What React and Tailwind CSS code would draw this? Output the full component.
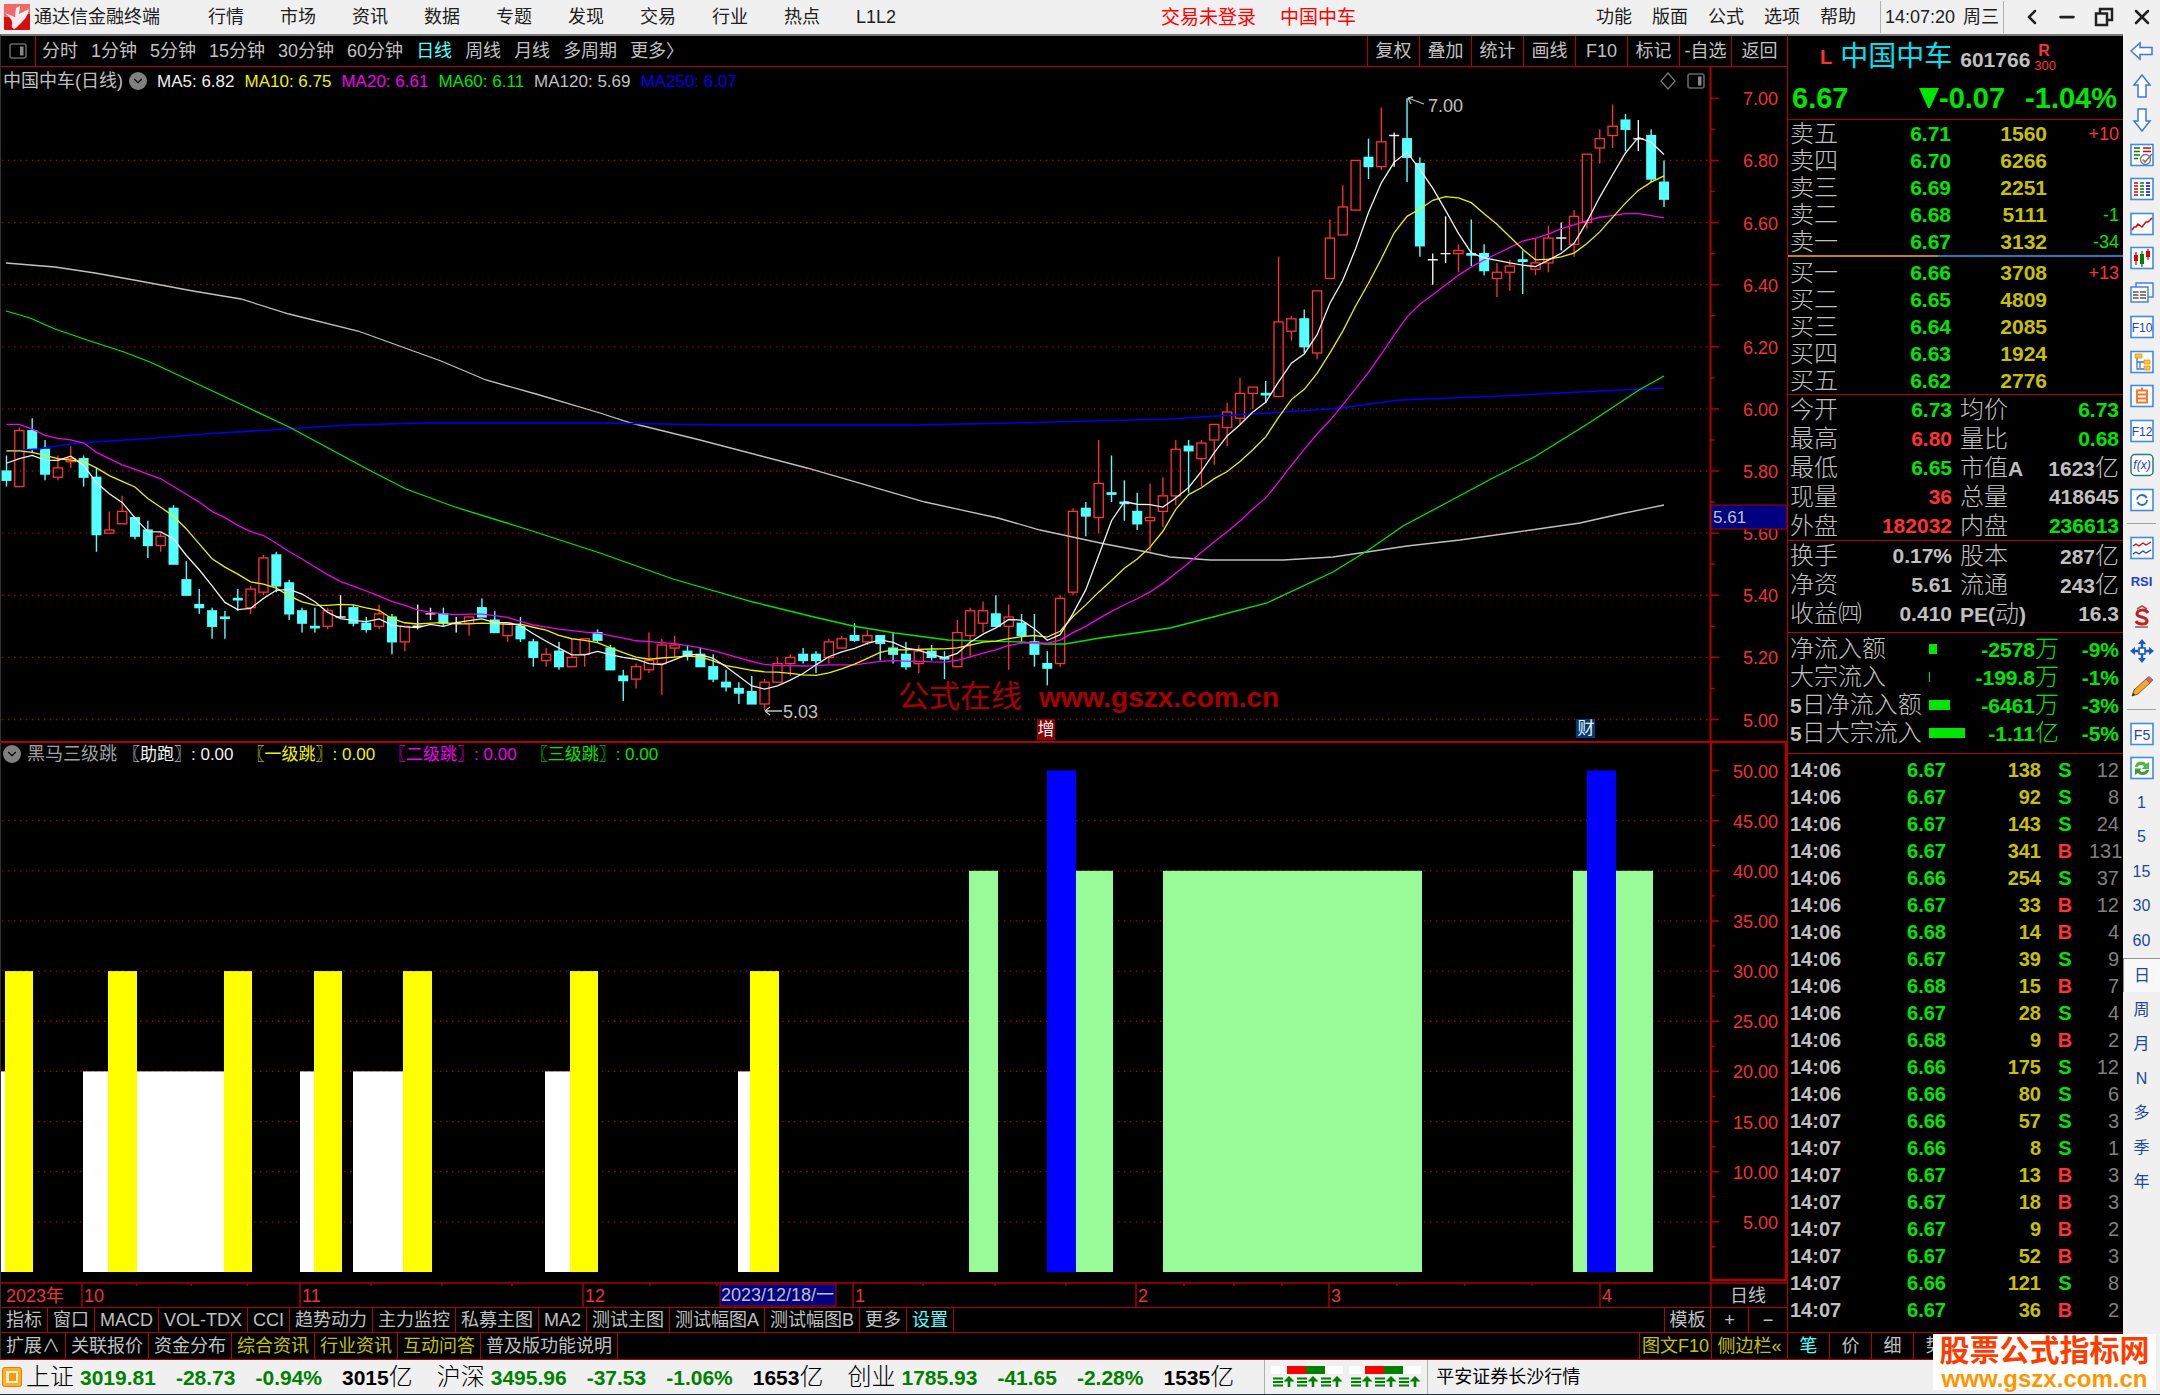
import { ChevronDown, ChevronLeft, Minus, X } from "lucide-react";

const MENU = ["行情", "市场", "资讯", "数据", "专题", "发现", "交易", "行业", "热点", "L1L2"];
const TOOLS = ["功能", "版面", "公式", "选项", "帮助"];
const PERIODS = ["分时", "1分钟", "5分钟", "15分钟", "30分钟", "60分钟", "日线", "周线", "月线", "多周期", "更多〉"];
const CHART_ACTIONS = ["复权", "叠加", "统计", "画线", "F10", "标记", "-自选", "返回"];
const INDICATOR_TABS = ["指标", "窗口", "MACD", "VOL-TDX", "CCI", "趋势动力", "主力监控", "私募主图", "MA2", "测试主图", "测试幅图A", "测试幅图B", "更多", "设置"];
const INFO_TABS = ["扩展∧", "关联报价", "资金分布", "综合资讯", "行业资讯", "互动问答", "普及版功能说明"];

const MA_LEGEND = [
  { text: "MA5: 6.82", color: "text-[#f0f0f0]" },
  { text: "MA10: 6.75", color: "text-[#f0f000]" },
  { text: "MA20: 6.61", color: "text-[#f000f0]" },
  { text: "MA60: 6.11", color: "text-[#00e600]" },
  { text: "MA120: 5.69", color: "text-[#c0c0c0]" },
  { text: "MA250: 6.07", color: "text-[#0000f0]" },
];

const JUMP_LEGEND = [
  { text: "〖助跑〗: 0.00", color: "text-[#f0f0f0]" },
  { text: "〖一级跳〗: 0.00", color: "text-[#f0f000]" },
  { text: "〖二级跳〗: 0.00", color: "text-[#f000f0]" },
  { text: "〖三级跳〗: 0.00", color: "text-[#00e600]" },
];

// open, high, low, close in cents
const CANDLES = [
  [580, 585, 575, 577], [575, 594, 575, 593], [593, 597, 586, 587], [587, 590, 577, 579], [578, 585, 577, 581],
  [583, 588, 581, 584], [584, 585, 575, 578], [578, 581, 554, 559.5], [560, 567, 560, 561], [563, 572, 563, 567],
  [565, 565, 558, 559], [561, 564, 552, 556], [556, 560, 554, 559], [568, 569, 550, 550], [545, 551, 540, 540],
  [537, 542, 534, 536], [535, 536, 526, 530], [533, 535, 526, 532.5], [539, 542, 535, 538.5], [536, 543, 534, 542],
  [541, 553, 540, 552], [553, 554, 541, 543], [544, 545, 532, 534], [535, 536, 528, 531], [530, 536, 528, 529.5],
  [530, 536, 529, 535], [533, 540, 533, 533], [536, 537, 530, 531], [531, 533, 528, 529], [530, 537, 529, 534],
  [533, 534, 521, 525], [525, 530, 522, 530], [530, 537, 529, 530], [534, 536, 532, 534], [534, 536, 530, 531],
  [531, 533, 528, 531], [531, 533, 527, 533], [536, 539, 533, 533], [532, 535, 528, 528], [527, 531, 525, 531],
  [530, 533, 525, 526], [525, 526, 517, 520], [519, 523, 517, 521], [522, 525, 516, 517], [517, 526, 517, 520],
  [521, 526, 517, 526], [528, 529, 525, 525.5], [523, 524, 516, 516], [514, 516, 506, 512.5], [513, 518, 510, 517],
  [516, 528, 515, 519], [518, 526, 508, 524], [523, 527, 520, 524], [522, 524, 519, 520.5], [521, 523, 517, 517],
  [517, 521, 512, 513], [512, 516, 509, 510.5], [510, 512, 505, 508.5], [509, 514, 505, 505], [505, 513, 503, 512],
  [512, 520, 512, 518], [518, 521, 514, 520], [521, 523, 518, 519], [521, 522, 515, 519], [520, 526, 518, 525],
  [523, 527, 523, 526], [527, 531, 525, 525.5], [525, 529, 524, 527], [527, 527, 519, 524.5], [523, 528, 518, 521],
  [521, 525, 516, 517], [518, 524, 515, 522], [522, 524, 519, 520], [520, 522, 513, 519.5], [517, 532, 517, 528],
  [527, 536, 520, 535], [531, 538, 528, 535], [534, 540, 530, 530], [530, 537, 516, 533], [531, 534, 525, 527],
  [525, 534, 517, 521], [518, 522, 511, 516.5], [518, 540, 517, 539], [541, 568, 540, 567], [568, 570, 559, 565.5],
  [565, 590, 560, 576], [573, 585, 570, 572.5], [570, 577, 564, 569.5], [567, 573, 561, 563], [564, 576, 554, 565],
  [567, 578, 562, 572], [572, 590, 569, 587], [588, 590, 573, 586.5], [584, 590, 575, 589], [590, 595, 582, 595],
  [594, 602, 588, 599], [597, 610, 595, 605], [605, 607, 600, 607], [605, 609, 602, 604.5], [604, 649, 604, 628],
  [625, 630, 622, 629], [629, 632, 618, 620], [618, 638, 616, 638], [642, 661, 642, 655], [656, 672, 656, 665],
  [664, 680, 664, 680], [681, 687, 674, 678], [678, 697, 677, 686], [688, 689, 678, 688], [687, 700, 673, 681],
  [679, 681, 649, 652.5], [648, 650, 640, 648], [650, 662, 647, 650], [650, 653, 644, 651], [650, 661, 646, 649.5],
  [650, 653, 643, 644.5], [642, 647, 636, 644], [644, 648, 638, 646], [648, 651, 637, 647.5], [645, 655, 643, 647],
  [647, 659, 644, 655], [655, 660, 651, 655], [653, 664, 649, 662], [660, 682, 658, 682], [684, 690, 679, 687],
  [688, 698, 684, 691], [693, 695, 683, 690], [687, 693, 683, 687], [688, 690, 673, 674], [673, 680, 665, 667.5],
];

const MA60 = "6,311 30,318 55,329 90,341 124,352 150,362 189,380 251,409 291,428 369,470 406,489 455,507 526,529 600,553 673,579 753,602 814,617 853,626 895,633 948,640 1021,642 1045,644 1065,644 1100,638 1136,633 1170,628 1213,617 1267,603 1333,572 1367,551 1403,526 1450,501 1491,479 1536,456 1589,423 1639,390 1664,376";
const MA120 = "6,263 55,267 95,273 134,280 193,291 241,299 289,314 358,331 441,361 486,380 536,394 600,413 631,423 700,440 807,468 925,502 998,518 1040,530 1105,544 1147,552 1170,557 1210,560 1283,560 1333,557 1367,552 1407,546 1460,540 1517,532 1580,523 1620,514 1664,505";
const MA250 = "6,451 38,449 77,443 142,439 218,433 272,430 348,425 425,423 600,423 722,425 912,425 1015,423 1092,421 1170,419 1200,417 1300,411 1340,408 1400,400 1500,396 1600,391 1664,388";

// left, right, level
const BARS = [
  { x1: 1, x2: 5, v: 20, fill: "#ffffff" },
  { x1: 5, x2: 33, v: 30, fill: "#ffff00" },
  { x1: 83, x2: 224, v: 20, fill: "#ffffff" },
  { x1: 108, x2: 137, v: 30, fill: "#ffff00" },
  { x1: 224, x2: 252, v: 30, fill: "#ffff00" },
  { x1: 300, x2: 314, v: 20, fill: "#ffffff" },
  { x1: 314, x2: 342, v: 30, fill: "#ffff00" },
  { x1: 353, x2: 403, v: 20, fill: "#ffffff" },
  { x1: 403, x2: 432, v: 30, fill: "#ffff00" },
  { x1: 545, x2: 570, v: 20, fill: "#ffffff" },
  { x1: 570, x2: 598, v: 30, fill: "#ffff00" },
  { x1: 738, x2: 750, v: 20, fill: "#ffffff" },
  { x1: 750, x2: 779, v: 30, fill: "#ffff00" },
  { x1: 969, x2: 998, v: 40, fill: "#98fb98" },
  { x1: 1047, x2: 1076, v: 50, fill: "#0000ff" },
  { x1: 1076, x2: 1113, v: 40, fill: "#98fb98" },
  { x1: 1163, x2: 1422, v: 40, fill: "#98fb98" },
  { x1: 1573, x2: 1587, v: 40, fill: "#98fb98" },
  { x1: 1587, x2: 1616, v: 50, fill: "#0000ff" },
  { x1: 1616, x2: 1653, v: 40, fill: "#98fb98" },
];

const MONTHS = [[82, "10"], [300, "11"], [583, "12"], [853, "1"], [1136, "2"], [1329, "3"], [1600, "4"]];
const WEEK_TICKS = [137, 191, 247, 371, 442, 512, 650, 717, 923, 995, 1066, 1184, 1234, 1282, 1397, 1465, 1532];

const ASKS = [["卖五", "6.71", "1560", "+10"], ["卖四", "6.70", "6266", ""], ["卖三", "6.69", "2251", ""], ["卖二", "6.68", "5111", "-1"], ["卖一", "6.67", "3132", "-34"]];
const BIDS = [["买一", "6.66", "3708", "+13"], ["买二", "6.65", "4809", ""], ["买三", "6.64", "2085", ""], ["买四", "6.63", "1924", ""], ["买五", "6.62", "2776", ""]];

const GREEN = "text-[#00e600]";
const RED = "text-[#ff3232]";
const GRAY = "text-[#c0c0c0]";

const STATS = [
  ["今开", "6.73", GREEN, "均价", "6.73", GREEN],
  ["最高", "6.80", RED, "量比", "0.68", GREEN],
  ["最低", "6.65", GREEN, "市值A", "1623亿", GRAY],
  ["现量", "36", RED, "总量", "418645", GRAY],
  ["外盘", "182032", RED, "内盘", "236613", GREEN],
];
const CAPITAL = [
  ["换手", "0.17%", GRAY, "股本", "287亿", GRAY],
  ["净资", "5.61", GRAY, "流通", "243亿", GRAY],
  ["收益㈣", "0.410", GRAY, "PE(动)", "16.3", GRAY],
];
const FLOWS = [
  { label: "净流入额", bar: 8, value: "-2578万", pct: "-9%" },
  { label: "大宗流入", bar: 1, value: "-199.8万", pct: "-1%" },
  { label: "5日净流入额", bar: 21, value: "-6461万", pct: "-3%" },
  { label: "5日大宗流入", bar: 36, value: "-1.11亿", pct: "-5%" },
];
const TRADES = [
  ["14:06", "6.67", 138, "S", 12], ["14:06", "6.67", 92, "S", 8], ["14:06", "6.67", 143, "S", 24], ["14:06", "6.67", 341, "B", 131],
  ["14:06", "6.66", 254, "S", 37], ["14:06", "6.67", 33, "B", 12], ["14:06", "6.68", 14, "B", 4], ["14:06", "6.67", 39, "S", 9],
  ["14:06", "6.68", 15, "B", 7], ["14:06", "6.67", 28, "S", 4], ["14:06", "6.68", 9, "B", 2], ["14:06", "6.66", 175, "S", 12],
  ["14:06", "6.66", 80, "S", 6], ["14:07", "6.66", 57, "S", 3], ["14:07", "6.66", 8, "S", 1], ["14:07", "6.67", 13, "B", 3],
  ["14:07", "6.67", 18, "B", 3], ["14:07", "6.67", 9, "B", 2], ["14:07", "6.67", 52, "B", 3], ["14:07", "6.66", 121, "S", 8],
  ["14:07", "6.67", 36, "B", 2],
];
const INDEXES = [
  ["上证", "3019.81", "-28.73", "-0.94%", "3015"],
  ["沪深", "3495.96", "-37.53", "-1.06%", "1653"],
  ["创业", "1785.93", "-41.65", "-2.28%", "1535"],
];

const xOf = (i) => 6.5 + 12.849 * i;
const yOf = (cents) => 98.3 + (700 - cents) * 3.106;
const levelY = (v) => 1272 - v * 10.03;

// the first values need closes from before the visible range
function movingAverage(n, lead) {
  return CANDLES.map((_, i) => {
    const avg = i < lead.length ? lead[i] : CANDLES.slice(i - n + 1, i + 1).reduce((s, c) => s + c[3], 0) / n;
    return `${xOf(i)},${yOf(avg)}`;
  }).join(" ");
}

const MA5 = movingAverage(5, [582.5, 584, 585, 583.5]);
const MA10 = movingAverage(10, [586.5, 586.5, 586, 585, 584, 583.5, 583, 581, 578.5]);
const MA20 = movingAverage(20, [595, 595, 593.5, 591.5, 590.5, 590, 589, 586, 584, 582, 580.5, 579, 577.5, 575, 572.5, 570, 567, 565, 562.5]);

function Candle({ i, data }) {
  const [o, h, l, c] = data;
  const x = xOf(i);
  const top = yOf(Math.max(o, c));
  const bottom = yOf(Math.min(o, c));
  if (o === c) {
    return <path d={`M${x} ${yOf(h)}V${yOf(l)}M${x - 5} ${top}H${x + 5}`} stroke="#f0f0f0" strokeWidth="1.4" />;
  }
  if (c > o) {
    return (
      <g stroke="#ff3232" strokeWidth="1.3" fill="none">
        <path d={`M${x} ${yOf(h)}V${top}M${x} ${bottom}V${yOf(l)}`} />
        <rect x={x - 4.6} y={top} width="9.2" height={bottom - top} />
      </g>
    );
  }
  return (
    <g fill="#54ffff">
      <rect x={x - 0.7} y={yOf(h)} width="1.4" height={yOf(l) - yOf(h)} />
      <rect x={x - 5} y={top - 0.6} width="10" height={bottom - top + 1.2} />
    </g>
  );
}

function PriceChart() {
  const majors = [700, 680, 660, 640, 620, 600, 580, 560, 540, 520, 500];
  return (
    <svg viewBox="1 95 1786 646" preserveAspectRatio="none" className="block w-full min-h-0 flex-[646] overflow-visible" role="img" aria-label="日线">
      {majors.slice(1).map((p) => (
        <line key={p} x1="2" x2="1710" y1={yOf(p)} y2={yOf(p)} stroke="#b00000" strokeWidth="1.3" strokeDasharray="1.4 4.6" />
      ))}
      {CANDLES.map((c, i) => (
        <Candle key={i} i={i} data={c} />
      ))}
      <g fill="none" strokeWidth="1.3">
        <polyline points={MA120} stroke="#c0c0c0" />
        <polyline points={MA250} stroke="#0000f0" strokeWidth="1.6" />
        <polyline points={MA60} stroke="#00e600" />
        <polyline points={MA20} stroke="#f000f0" />
        <polyline points={MA10} stroke="#f0f000" />
        <polyline points={MA5} stroke="#f0f0f0" />
      </g>

      {/* High and low marks */}
      <g fill="none" stroke="#c0c0c0" strokeWidth="1.3">
        <path d="M1424 104L1408 98M1408 98L1413 97M1408 98L1411 104" />
        <path d="M782 711H765M765 711L770 707M765 711L770 715" />
      </g>
      <g fill="#c0c0c0" fontSize="18" dominantBaseline="central">
        <text x="1428" y="106">7.00</text>
        <text x="783" y="712">5.03</text>
      </g>

      <g fill="#a80000" dominantBaseline="central">
        <text x="898" y="696" fontSize="31">公式在线</text>
        <text x="1039" y="697" fontSize="28" fontWeight="bold">www.gszx.com.cn</text>
      </g>
      <rect x="1037" y="719" width="18" height="21" fill="#8b0000" />
      <rect x="1576" y="719" width="19" height="19" fill="#003c78" />
      <g fill="#f0f0f0" fontSize="17" textAnchor="middle" dominantBaseline="central">
        <text x="1046" y="729">增</text>
        <text x="1586" y="728">财</text>
      </g>

      {/* Price axis */}
      <line x1="1710.5" x2="1710.5" y1="67" y2="741" stroke="#b00000" strokeWidth="2" />
      {majors.map((p) => (
        <g key={p}>
          <line x1="1711" x2="1719" y1={yOf(p)} y2={yOf(p)} stroke="#b00000" strokeWidth="1.5" />
          {p > 500 && <line x1="1711" x2="1715" y1={yOf(p - 10)} y2={yOf(p - 10)} stroke="#b00000" strokeWidth="1.5" />}
          <text x="1778" y={yOf(p) + 1} fill="#f03232" fontSize="18" textAnchor="end" dominantBaseline="central">{(p / 100).toFixed(2)}</text>
        </g>
      ))}
      <rect x="1711" y="505" width="76" height="24" fill="#000080" stroke="#b00000" />
      <text x="1713" y="517" fill="#c0c0c0" fontSize="17" dominantBaseline="central">5.61</text>
    </svg>
  );
}

function JumpChart() {
  const levels = [50, 45, 40, 35, 30, 25, 20, 15, 10, 5];
  return (
    <svg viewBox="1 769 1786 513" preserveAspectRatio="none" className="block w-full min-h-0 flex-[513] overflow-visible" role="img" aria-label="黑马三级跳">
      {levels.slice(1).map((v) => (
        <line key={v} x1="2" x2="1710" y1={levelY(v)} y2={levelY(v)} stroke="#b00000" strokeWidth="1.3" strokeDasharray="1.4 4.6" />
      ))}
      {BARS.map((b) => (
        <rect key={b.x1} x={b.x1} y={levelY(b.v)} width={b.x2 - b.x1} height={1272 - levelY(b.v)} fill={b.fill} />
      ))}
      <rect x="1711" y="742" width="75" height="538" fill="none" stroke="#b00000" strokeWidth="2.4" />
      {levels.map((v) => (
        <g key={v}>
          <line x1="1711" x2="1719" y1={levelY(v)} y2={levelY(v)} stroke="#b00000" strokeWidth="1.5" />
          <line x1="1711" x2="1715" y1={levelY(v - 2.5)} y2={levelY(v - 2.5)} stroke="#b00000" strokeWidth="1.5" />
          <text x="1778" y={levelY(v) + 1} fill="#f03232" fontSize="18" textAnchor="end" dominantBaseline="central">{v.toFixed(2)}</text>
        </g>
      ))}
    </svg>
  );
}

function TimeAxis() {
  return (
    <svg viewBox="1 1282 1786 25" preserveAspectRatio="none" className="block h-[25px] w-full shrink-0">
      <g stroke="#b00000" strokeWidth="1.4">
        <line x1="1" x2="1787" y1="1283" y2="1283" />
        {MONTHS.map(([x]) => <line key={x} x1={x} x2={x} y1="1283" y2="1307" />)}
        {WEEK_TICKS.map((x) => <line key={x} x1={x} x2={x} y1="1283" y2="1286" />)}
        <line x1="1711" x2="1711" y1="1283" y2="1307" />
      </g>
      <rect x="720" y="1284" width="116" height="22" fill="#000080" stroke="#b00000" />
      <g fill="#f03232" fontSize="18" dominantBaseline="central">
        <text x="6" y="1296">2023年</text>
        {MONTHS.map(([x, label]) => <text key={x} x={x + 2} y="1296">{label}</text>)}
      </g>
      <g fill="#c0c0c0" fontSize="18" dominantBaseline="central">
        <text x="721" y="1295">2023/12/18/一</text>
        <text x="1748" y="1296" textAnchor="middle">日线</text>
      </g>
    </svg>
  );
}

// figures are bold, Chinese characters thin and larger
function Mixed({ children }) {
  return String(children).split(/([^\x00-\x7f]+)/).map((part, i) =>
    /[^\x00-\x7f]/.test(part) ? <span key={i} className="text-2xl leading-none font-light">{part}</span> : part
  );
}

function QuoteTable({ rows, label }) {
  return (
    <table className="w-full table-fixed text-[21px] leading-none font-bold" aria-label={label}>
      <colgroup>
        <col className="w-[70px]" /><col className="w-[93px]" /><col className="w-[96px]" /><col />
      </colgroup>
      <tbody>
        {rows.map(([name, price, volume, delta]) => (
          <tr key={name} className="h-[27px]">
            <th scope="row" className="pl-0.5 text-left text-[#c0c0c0]"><Mixed>{name}</Mixed></th>
            <td className="text-right text-[#00e600]">{price}</td>
            <td className="text-right text-[#c8c000]">{volume}</td>
            <td className={`pr-1 text-right text-lg leading-none font-normal ${delta.startsWith("+") ? "text-[#ff3232]" : "text-[#00e600]"}`}>{delta}</td>
          </tr>
        ))}
      </tbody>
    </table>
  );
}

function StatTable({ rows, label }) {
  return (
    <table className="w-full table-fixed text-[21px] leading-none font-bold whitespace-nowrap" aria-label={label}>
      <colgroup>
        <col className="w-[76px]" /><col className="w-[88px]" /><col className="w-[80px]" /><col />
      </colgroup>
      <tbody>
        {rows.map(([a, av, ac, b, bv, bc]) => (
          <tr key={a} className="h-[29px]">
            <th scope="row" className="pl-0.5 text-left text-[#c0c0c0]"><Mixed>{a}</Mixed></th>
            <td className={`text-right ${ac}`}>{av}</td>
            <th scope="row" className="pl-2 text-left text-[#c0c0c0]"><Mixed>{b}</Mixed></th>
            <td className={`pr-1 text-right ${bc}`}><Mixed>{bv}</Mixed></td>
          </tr>
        ))}
      </tbody>
    </table>
  );
}

function QuotePanel() {
  return (
    <aside className="flex w-[335px] shrink-0 flex-col border-t-2 border-[#777] bg-black">
      <div className="flex h-[84px] shrink-0 flex-col border-b border-[#b00000]">
        <div className="flex h-[42px] items-center pl-8">
          <span className="text-xl font-bold text-[#ff3232]">L</span>
          <h1 className="ml-2 text-[28px] leading-none text-[#00e0f0]">中国中车</h1>
          <span className="mt-1 ml-2 text-[21px] leading-none font-bold text-[#c0c0c0]">601766</span>
          <span className="ml-1 flex flex-col text-[13px] leading-[13px] text-[#ff3232]">
            <b className="pl-1 text-base leading-4">R</b>
            300
          </span>
        </div>
        <div className="flex h-10 items-center pr-1.5 pl-1 text-[29px] leading-none font-bold text-[#00e600]">
          <span>6.67</span>
          <svg viewBox="0 0 20 20" className="ml-auto size-5 fill-[#00e600]"><path d="M0 0H20L11 20H9Z" /></svg>
          <span>-0.07</span>
          <span className="ml-5">-1.04%</span>
        </div>
      </div>

      <div className="shrink-0"><QuoteTable rows={ASKS} label="卖盘" /></div>
      <div className="flex h-0.5 shrink-0">
        <div className="w-[150px] bg-[#c08020]" />
        <div className="flex-1 bg-[#2878b8]" />
      </div>
      <div className="shrink-0 border-b border-[#b00000] pt-0.5"><QuoteTable rows={BIDS} label="买盘" /></div>
      <div className="shrink-0 border-b border-[#b00000]"><StatTable rows={STATS} label="行情" /></div>
      <div className="shrink-0 border-b border-[#b00000] pb-1"><StatTable rows={CAPITAL} label="股本" /></div>

      <div className="shrink-0 border-b border-[#b00000] pt-0.5 pb-1.5">
        <table className="w-full table-fixed text-[21px] leading-none font-bold whitespace-nowrap" aria-label="资金流向">
          <colgroup>
            <col className="w-[141px]" /><col className="w-[40px]" /><col className="w-[90px]" /><col />
          </colgroup>
          <tbody>
            {FLOWS.map((f) => (
              <tr key={f.label} className="h-7 text-[#00e600]">
                <th scope="row" className="pl-0.5 text-left text-[#c0c0c0]"><Mixed>{f.label}</Mixed></th>
                <td><div className="h-2.5 bg-[#00e600]" style={{ width: f.bar }} /></td>
                <td className="text-right"><Mixed>{f.value}</Mixed></td>
                <td className="pr-1 text-right">{f.pct}</td>
              </tr>
            ))}
          </tbody>
        </table>
      </div>

      <div className="min-h-0 flex-1 overflow-hidden pt-0.5">
        <table className="w-full table-fixed text-xl leading-none font-bold" aria-label="分笔成交">
          <colgroup>
            <col className="w-[70px]" /><col className="w-[88px]" /><col className="w-[95px]" /><col className="w-12" /><col />
          </colgroup>
          <tbody>
            {TRADES.map(([time, price, volume, side, count], i) => (
              <tr key={i} className="h-[27px]">
                <td className="pl-0.5 text-[#c0c0c0]">{time}</td>
                <td className="text-right text-[#00e600]">{price}</td>
                <td className="text-right text-[#c8c000]">{volume}</td>
                <td className={`text-center ${side === "B" ? "text-[#ff3232]" : "text-[#00e600]"}`}>{side}</td>
                <td className="pr-1 text-right font-normal text-[#808080]">{count}</td>
              </tr>
            ))}
          </tbody>
        </table>
      </div>

      <div className="flex h-7 shrink-0 border-y border-[#b00000] text-lg leading-none text-[#c0c0c0]">
        <button className="w-[42px] border-r border-[#b00000] text-[#54ffff]">笔</button>
        <button className="w-[42px] border-r border-[#b00000]">价</button>
        <button className="w-[42px] border-r border-[#b00000]">细</button>
        <button className="w-[42px] border-r border-[#b00000]">势</button>
      </div>
    </aside>
  );
}

function Frame({ children, color = "#3c8ce8" }) {
  return (
    <svg viewBox="0 0 24 24" className="size-6">
      <rect x="1" y="1.5" width="22" height="21" fill="#fff" stroke={color} strokeWidth="1.6" />
      {children}
    </svg>
  );
}

const frameText = { textAnchor: "middle", dominantBaseline: "central", fill: "#2040c0", fontSize: 12 };

const SIDE_ICONS = [
  ["后退", <svg viewBox="0 0 24 24" className="size-6"><path d="M1 12L10 4V8.5H22V15.5H10V20Z" fill="#fff" stroke="#3c78e0" strokeWidth="1.5" /></svg>],
  ["上翻", <svg viewBox="0 0 24 24" className="size-6"><path d="M12 1L20 11H16V23H8V11H4Z" fill="#fff" stroke="#3c78e0" strokeWidth="1.5" /></svg>],
  ["下翻", <svg viewBox="0 0 24 24" className="size-6"><path d="M12 23L20 13H16V1H8V13H4Z" fill="#fff" stroke="#3c78e0" strokeWidth="1.5" /></svg>],
  ["自定义行情", <Frame>
    <path d="M4 5H10M4 8.500H10M4 12H10M4 15.500H8" stroke="#008000" strokeWidth="1.6" />
    <path d="M13 5H21M13 8.500H21M13 12H17" stroke="#e00000" strokeWidth="1.6" />
    <circle cx="15.500" cy="16.500" r="5" fill="#fff" stroke="#777" strokeWidth="1.3" />
    <path d="M13 16.500L15 19L22 11" fill="none" stroke="#777" strokeWidth="1.6" />
  </Frame>],
  ["报价列表", <Frame>
    <path d="M4 6H8M4 9H8M4 12H8M4 15H8M4 18H8" stroke="#e00000" strokeWidth="1.6" />
    <path d="M10 6H14M10 9H14M10 12H14M10 15H14M10 18H14" stroke="#008000" strokeWidth="1.6" />
    <path d="M16 6H20M16 9H20M16 12H20M16 15H20M16 18H20" stroke="#0000e0" strokeWidth="1.6" />
  </Frame>],
  ["分时图", <Frame><path d="M2 18L4 15L6 15L8 12L12 15L16 10L18 10L22 6" fill="none" stroke="#e00000" strokeWidth="1.5" /></Frame>],
  ["K线图", <Frame>
    <path d="M6 6V19M18 3V14" stroke="#e00000" strokeWidth="1.3" />
    <path d="M4 9H8V15H4ZM16 5H20V11H16Z" fill="#e00000" />
    <path d="M12 5V21" stroke="#008000" strokeWidth="1.3" />
    <path d="M10 8H14V18H10Z" fill="#008000" />
  </Frame>],
  ["资料", <svg viewBox="0 0 24 24" className="size-6">
    <rect x="6" y="2" width="17" height="14" fill="#fff" stroke="#3c78e0" strokeWidth="1.4" />
    <rect x="1" y="6" width="17" height="15" fill="#fff" stroke="#3c78e0" strokeWidth="1.4" />
    <path d="M3 11H8.500M10 11H16M3 14H8.500M10 14H16M3 17H8.500M10 17H16" stroke="#555" strokeWidth="1.3" />
  </svg>],
  ["F10", <Frame><text x="12" y="12.500" {...frameText}>F10</text></Frame>],
  ["板块树", <Frame>
    <path d="M7 7V19H14M7 12H14M10 12V18" fill="none" stroke="#3c78e0" strokeWidth="1.3" />
    <path d="M5 4H12V8H5ZM14 10H20V14H14ZM14 16H20V20H14Z" fill="#ffc840" stroke="#e09000" strokeWidth="0.8" />
  </Frame>],
  ["自选股", <Frame><path d="M7 6.500H17V18.500H7ZM7 10.500H17M7 14.500H17M12 3.500V6.500" fill="none" stroke="#f07828" strokeWidth="1.9" /></Frame>],
  ["F12", <Frame><text x="12" y="12.500" {...frameText}>F12</text></Frame>],
  ["公式", <svg viewBox="0 0 24 24" className="size-6">
    <rect x="1" y="1.500" width="22" height="21" rx="4" fill="#fff" stroke="#208080" strokeWidth="1.5" />
    <text x="12" y="12" {...frameText} fontStyle="italic">f(x)</text>
  </svg>],
  ["循环", <Frame>
    <circle cx="12" cy="12" r="5" fill="none" stroke="#2070d0" strokeWidth="1.8" strokeDasharray="13 2.700" />
  </Frame>],
  null,
  ["多图", <Frame>
    <path d="M3 10L6 8L9 10L13 7L16 9L21 6" fill="none" stroke="#e00000" strokeWidth="1.4" />
    <path d="M3 18L6 16L9 18L13 15L16 17L21 14" fill="none" stroke="#2040e0" strokeWidth="1.4" />
  </Frame>],
  ["RSI", <span className="text-[13px] font-bold text-[#2040d0]">RSI</span>],
  ["特色指标", <svg viewBox="0 0 24 24" className="size-6">
    <path d="M18 8C16 4 7 4 7 9C7 13 17 11 17 16C17 20 8 20 6 16" fill="none" stroke="#c02020" strokeWidth="3" />
    <path d="M7 4L12 1L17 4M5 22H18" fill="none" stroke="#a05050" strokeWidth="1.6" />
  </svg>],
  ["移动", <svg viewBox="0 0 24 24" className="size-6">
    <path d="M12 0L16 5H8ZM12 24L16 19H8ZM0 12L5 8V16ZM24 12L19 8V16Z" fill="#1858c0" />
    <path d="M12 4V20M4 12H20" stroke="#1858c0" strokeWidth="2.400" />
    <rect x="9" y="9" width="6" height="6" fill="#fff" stroke="#1858c0" strokeWidth="1.6" />
  </svg>],
  ["画笔", <svg viewBox="0 0 24 24" className="size-6">
    <path d="M2 22L4 16L16 5L20 9L8 20Z" fill="#f0a830" stroke="#805020" strokeWidth="0.9" />
    <path d="M16 5L19 2.500L23 6L20 9Z" fill="#e06060" stroke="#905050" strokeWidth="0.8" />
    <path d="M2 22L3 18.800L5.200 20.800Z" fill="#333" />
  </svg>],
  null,
  ["F5", <Frame><text x="12" y="12.500" {...frameText} fontSize="14">F5</text></Frame>],
  ["刷新", <Frame>
    <path d="M5 11C5 5 14 4 16 8L19 6V13H12L14 10.500C12 8 8 9 8 11Z" fill="#50b848" />
    <path d="M19 14C18 20 10 20 8 17L5 19V12.500H11L10 14.500C12 17 15 16 16 14Z" fill="#3c9c38" />
  </Frame>],
];

function SideBar() {
  return (
    <nav className="flex w-[37px] shrink-0 flex-col bg-[#f0f0f0]" aria-label="快捷工具">
      {SIDE_ICONS.map((item, i) =>
        item ? (
          <button key={i} aria-label={item[0]} className="flex shrink-0 items-center justify-center odd:h-[34px] even:h-[35px]">{item[1]}</button>
        ) : (
          <hr key={i} className="mx-1 my-1.5 border-[#a0a0a0]" />
        )
      )}
      {["1", "5", "15", "30", "60", "日", "周", "月", "N", "多", "季", "年"].map((p) => (
        <button
          key={p}
          className={`flex shrink-0 items-center justify-center text-base text-[#204898] odd:h-[34px] even:h-[35px] ${p === "日" ? "border-t border-l border-[#909090] bg-[#f8f8f8]" : ""}`}
        >
          {p}
        </button>
      ))}
    </nav>
  );
}

function LayoutIcon() {
  return (
    <svg viewBox="0 0 18 18" className="size-[18px]">
      <rect x="1" y="2" width="16" height="14" rx="2" fill="none" stroke="#666" strokeWidth="1.6" />
      <rect x="11" y="4.500" width="3.500" height="9" fill="#888" />
    </svg>
  );
}

function Fold() {
  return (
    <button aria-label="展开" className="flex size-[18px] shrink-0 items-center justify-center rounded-full bg-[#808080] text-black">
      <ChevronDown size={14} />
    </button>
  );
}

// up/down counts of one market
function Breadth({ red, green }) {
  return (
    <svg viewBox="0 0 72 24" className="h-6 w-[72px]">
      <rect x="0" y="1" width="72" height="8" fill="#fff" />
      <rect x={red} y="1" width="19" height="8" fill="#ff0000" />
      <rect x={green} y="1" width="19" height="8" fill="#008000" />
      {[0, 24, 48].map((x) => (
        <g key={x} stroke="#008000" fill="none">
          <path d={`M${x + 2} 13.500H${x + 12}M${x + 2} 17H${x + 12}M${x + 2} 20.500H${x + 12}`} strokeWidth="1.8" />
          <path d={`M${x + 18} 22V14`} strokeWidth="2.600" />
          <path d={`M${x + 12.5} 16.500L${x + 18} 11L${x + 23.5} 16.500Z`} fill="#008000" stroke="none" />
        </g>
      ))}
    </svg>
  );
}

export default function App() {
  return (
    <div className='flex h-screen min-h-[1100px] flex-col overflow-hidden bg-black font-["Liberation_Sans","Noto_Sans_CJK_SC",sans-serif]'>
      {/* Title bar */}
      <header className="flex h-[34px] shrink-0 items-center bg-[#f0f0f0] text-lg leading-none whitespace-nowrap text-[#202020]">
        <svg viewBox="0 0 26 26" className="mr-1 ml-1 size-[26px]">
          <rect width="26" height="26" rx="1" fill="#d80c10" />
          <path d="M0 0H26V10C16 10 8 14 0 13Z" fill="#f06868" />
          <path d="M1 9L11 13L12 4L16 2L15 10L25 5C24 13 19 17 12 24C10 26 7 24 8 20C9 16 5 13 1 9Z" fill="#fff" opacity="0.92" />
        </svg>
        <span>通达信金融终端</span>
        <nav className="ml-12 flex gap-9">
          {MENU.map((m) => <button key={m}>{m}</button>)}
        </nav>
        <div className="ml-auto flex gap-6 text-[19px] text-[#ff0000]">
          <button>交易未登录</button>
          <button>中国中车</button>
        </div>
        <nav className="ml-60 flex gap-5">
          {TOOLS.map((m) => <button key={m}>{m}</button>)}
        </nav>
        <div className="ml-6 flex h-8 items-center gap-2 border-x border-[#b0b0b0] px-1">
          <span>14:07:20</span>
          <span>周三</span>
        </div>
        <div className="ml-4 flex items-center gap-3 pr-1.5">
          <button aria-label="收起"><ChevronLeft size={24} strokeWidth={2.5} /></button>
          <button aria-label="最小化"><Minus size={22} strokeWidth={3} /></button>
          <button aria-label="还原" className="px-1">
            <svg viewBox="0 0 20 20" className="size-5"><path d="M6 6V2H18V13H13M2 6.500H13V18H2Z" fill="none" stroke="#222" strokeWidth="2.500" /></svg>
          </button>
          <button aria-label="关闭"><X size={24} strokeWidth={2.5} /></button>
        </div>
      </header>

      <main className="flex min-h-0 flex-1">
        <section className="flex min-w-0 flex-1 flex-col border-t-2 border-r border-l border-t-[#777] border-r-[#b00000] border-l-[#333] text-lg leading-none whitespace-nowrap text-[#c0c0c0]">
          {/* Period toolbar */}
          <div className="flex h-[31px] shrink-0 border-b border-[#b00000]">
            <button aria-label="布局" className="flex w-[35px] items-center justify-center border-r border-[#b00000]"><LayoutIcon /></button>
            <div className="flex items-center gap-[13px] pl-1.5">
              {PERIODS.map((p) => <button key={p} className={p === "日线" ? "text-[#54ffff]" : ""}>{p}</button>)}
            </div>
            <div className="ml-auto flex">
              {CHART_ACTIONS.map((a) => <button key={a} className="w-[52px] border-l border-[#b00000] last:w-14">{a}</button>)}
            </div>
          </div>

          <div className="flex h-7 shrink-0 items-center gap-2.5 pr-[82px] pl-0.5 text-[17px]">
            <div className="flex items-center gap-1.5 text-lg leading-none">
              中国中车(日线)
              <Fold />
            </div>
            {MA_LEGEND.map((m) => <span key={m.text} className={m.color}>{m.text}</span>)}
            <svg viewBox="0 0 18 18" className="ml-auto size-[18px]"><path d="M9 1L16 9L9 17L2 9Z" fill="none" stroke="#777" strokeWidth="1.3" /></svg>
            <LayoutIcon />
          </div>
          <PriceChart />

          <div className="flex h-7 shrink-0 items-center gap-1.5 border-t-2 border-[#b00000] pb-1 pl-0.5 text-[17px]">
            <Fold />
            <span className="text-lg leading-none text-[#a0a0a0]">黑马三级跳</span>
            <div className="flex gap-3.5">
              {JUMP_LEGEND.map((m) => <span key={m.text} className={m.color}>{m.text}</span>)}
            </div>
          </div>
          <JumpChart />
          <TimeAxis />

          {/* Indicator and news tabs */}
          <div className="flex h-[25px] shrink-0 border-t border-[#b00000]">
            {INDICATOR_TABS.map((t) => (
              <button key={t} className={`border-r border-[#b00000] px-[5px] ${t === "设置" ? "text-[#54ffff]" : ""}`}>{t}</button>
            ))}
            <button className="ml-auto w-[47px] border-x border-[#b00000]">模板</button>
            <button className="w-[38px] border-r border-[#b00000]">+</button>
            <button className="w-[38px]">−</button>
          </div>
          <div className="flex h-7 shrink-0 border-y border-[#b00000]">
            {INFO_TABS.map((t) => (
              <button key={t} className={`border-r border-[#b00000] px-[5px] ${["综合资讯", "行业资讯", "互动问答"].includes(t) ? "text-[#c8c000]" : ""}`}>{t}</button>
            ))}
            <button className="ml-auto w-[73px] border-x border-[#b00000] text-[#c8c000]">图文F10</button>
            <button className="flex w-[75px] items-center justify-center overflow-hidden text-[#c8c000]">侧边栏«</button>
          </div>
        </section>

        <QuotePanel />
        <SideBar />
      </main>

      {/* Status bar */}
      <footer className="relative flex h-[35px] shrink-0 items-center border-b border-[#203040] bg-[#f0f0f0] text-[21px] leading-none whitespace-nowrap text-black">
        <svg viewBox="0 0 20 20" className="mr-1 ml-0.5 size-5">
          <rect x="0.500" y="0.500" width="19" height="19" rx="2" fill="#f8b030" stroke="#e08000" />
          <rect x="4" y="4" width="12" height="12" fill="#fff0c0" />
          <rect x="7" y="6" width="7" height="8" fill="#f09820" />
        </svg>
        {INDEXES.map(([name, price, diff, pct, amount]) => (
          <div key={name} className="mr-6 flex items-center font-bold text-[#008000]">
            <span className="mr-1.5 text-2xl leading-none font-light text-black">{name}</span>
            <span>{price}</span>
            <span className="ml-5">{diff}</span>
            <span className="ml-5">{pct}</span>
            <span className="ml-5 text-black"><Mixed>{amount + "亿"}</Mixed></span>
          </div>
        ))}
        <div className="ml-1.5 flex h-full items-center gap-1.5 border-x border-[#b0b0b0] px-1.5">
          <Breadth red={16} green={35} />
          <Breadth red={16} green={35} />
        </div>
        <span className="ml-2 text-lg leading-none">平安证券长沙行情</span>

        <div className="absolute right-1 bottom-1 flex w-[223px] flex-col items-center bg-white text-center font-bold">
          <span className="text-[30px] leading-[33px] text-[#ff3c00]">股票公式指标网</span>
          <span className="text-2xl leading-[23px] text-[#ff9600]">www.gszx.com.cn</span>
        </div>
      </footer>
    </div>
  );
}
